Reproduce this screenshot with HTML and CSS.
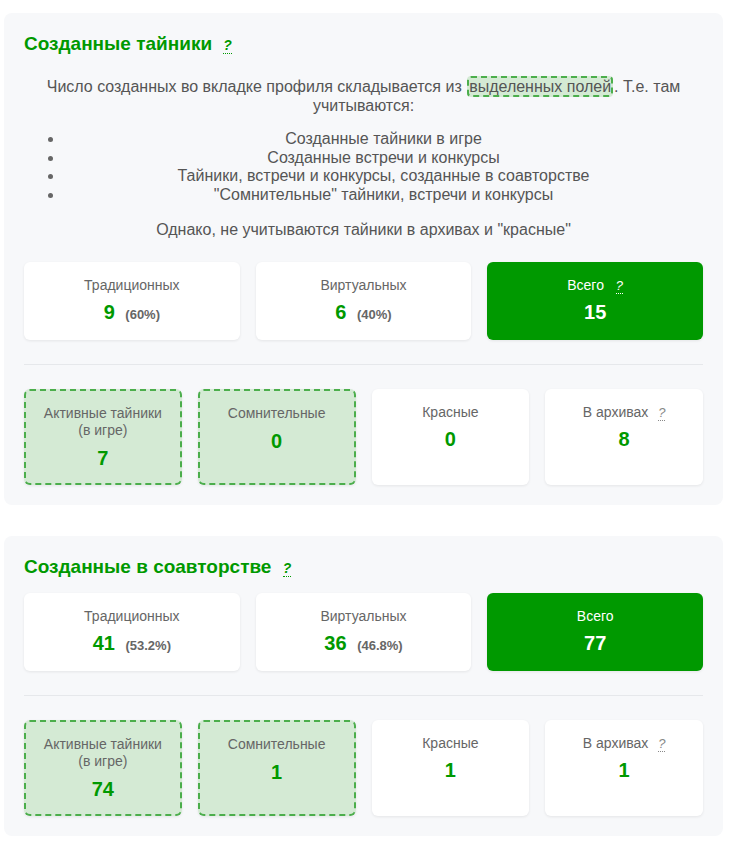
FILE: index.html
```html
<!DOCTYPE html>
<html lang="ru">
<head>
<meta charset="utf-8">
<link rel="stylesheet" href="styles.css">
</head>
<body>
<div class="wrap">
  <section class="panel">
    <h2 class="title">Созданные тайники <abbr class="q">?</abbr></h2>
    <div class="info">
      <p class="para">Число созданных во вкладке профиля складывается из <span class="hl">выделенных полей</span>. Т.е. там учитываются:</p>
      <ul class="list">
        <li>Созданные тайники в игре</li>
        <li>Созданные встречи и конкурсы</li>
        <li>Тайники, встречи и конкурсы, созданные в соавторстве</li>
        <li>"Сомнительные" тайники, встречи и конкурсы</li>
      </ul>
      <p class="para">Однако, не учитываются тайники в архивах и "красные"</p>
    </div>
    <div class="row3">
      <div class="card"><div class="label">Традиционных</div><div class="num">9 <span class="pct">(60%)</span></div></div>
      <div class="card"><div class="label">Виртуальных</div><div class="num">6 <span class="pct">(40%)</span></div></div>
      <div class="card total"><div class="label">Всего <abbr class="q qw">?</abbr></div><div class="num">15</div></div>
    </div>
    <hr class="sep">
    <div class="row4">
      <div class="card hlcard"><div class="label">Активные тайники<br>(в игре)</div><div class="num">7</div></div>
      <div class="card hlcard"><div class="label">Сомнительные</div><div class="num">0</div></div>
      <div class="card"><div class="label">Красные</div><div class="num">0</div></div>
      <div class="card"><div class="label">В архивах <abbr class="q qg">?</abbr></div><div class="num">8</div></div>
    </div>
  </section>

  <section class="panel">
    <h2 class="title">Созданные в соавторстве <abbr class="q">?</abbr></h2>
    <div class="row3">
      <div class="card"><div class="label">Традиционных</div><div class="num">41 <span class="pct">(53.2%)</span></div></div>
      <div class="card"><div class="label">Виртуальных</div><div class="num">36 <span class="pct">(46.8%)</span></div></div>
      <div class="card total"><div class="label">Всего</div><div class="num">77</div></div>
    </div>
    <hr class="sep">
    <div class="row4">
      <div class="card hlcard"><div class="label">Активные тайники<br>(в игре)</div><div class="num">74</div></div>
      <div class="card hlcard"><div class="label">Сомнительные</div><div class="num">1</div></div>
      <div class="card"><div class="label">Красные</div><div class="num">1</div></div>
      <div class="card"><div class="label">В архивах <abbr class="q qg">?</abbr></div><div class="num">1</div></div>
    </div>
  </section>
</div>
</body>
</html>
```

FILE: styles.css
```css
html, body {
  margin: 0;
  padding: 0;
  background: #ffffff;
}
body {
  font-family: "Liberation Sans", Arial, sans-serif;
  color: #555555;
}
.wrap {
  width: 719px;
  padding: 13px 0 0 4px;
  display: flex;
  flex-direction: column;
  gap: 31px;
}
.panel {
  background: #f7f8fa;
  border-radius: 8px;
  padding: 20px 20px 20px 20px;
}
.title {
  margin: 0 0 15px 0;
  font-size: 19px;
  line-height: 22px;
  font-weight: bold;
  color: #009900;
}
.q {
  font-size: 13px;
  font-style: italic;
  font-weight: normal;
  text-decoration: none;
  border-bottom: 1px dotted currentColor;
  margin-left: 6px;
  vertical-align: baseline;
  line-height: 1;
}
.title .q {
  font-size: 14px;
  font-weight: bold;
  color: #009900;
  margin-left: 6px;
}
.qw { color: #ffffff; margin-left: 8px; }
.qg { color: #888888; }
.info {
  text-align: center;
  font-size: 16px;
  line-height: 18.5px;
  color: #555555;
  padding-top: 8px;
  margin: 0 0 22px 0;
}
.para {
  margin: 0;
  padding: 0 8px;
}
.list {
  margin: 15px 0 17px 0;
  padding-left: 40px;
}
.list li::marker {
  color: #666666;
}
.hl {
  background: #d4ead4;
  border: 2px dashed #4cae4c;
  border-radius: 4px;
  margin: 0 1px;
}
.row3 {
  display: grid;
  grid-template-columns: repeat(3, 1fr);
  gap: 16px;
}
.row4 {
  display: grid;
  grid-template-columns: repeat(4, 1fr);
  gap: 16px;
}
.card {
  background: #ffffff;
  border-radius: 6px;
  box-shadow: 0 1px 3px rgba(0, 0, 0, 0.08);
  text-align: center;
  padding: 15px 10px 15px 10px;
}
.row3 .card {
  height: 48px;
}
.label {
  font-size: 14px;
  line-height: 17px;
  color: #666666;
}
.num {
  margin-top: 6px;
  font-size: 20px;
  line-height: 24px;
  font-weight: bold;
  color: #009900;
}
.pct {
  font-size: 13px;
  color: #666666;
  margin-left: 5px;
}
.total {
  background: #009900;
}
.total .label,
.total .num {
  color: #ffffff;
}
.hlcard {
  background: #d4ead4;
  border: 2px dashed #4cae4c;
  padding: 14px 8px 13px 8px;
}
.hlcard .num {
  margin-top: 7px;
}
.sep {
  border: 0;
  border-top: 1px solid #e6e8eb;
  margin: 24px 0 24px 0;
}
```
